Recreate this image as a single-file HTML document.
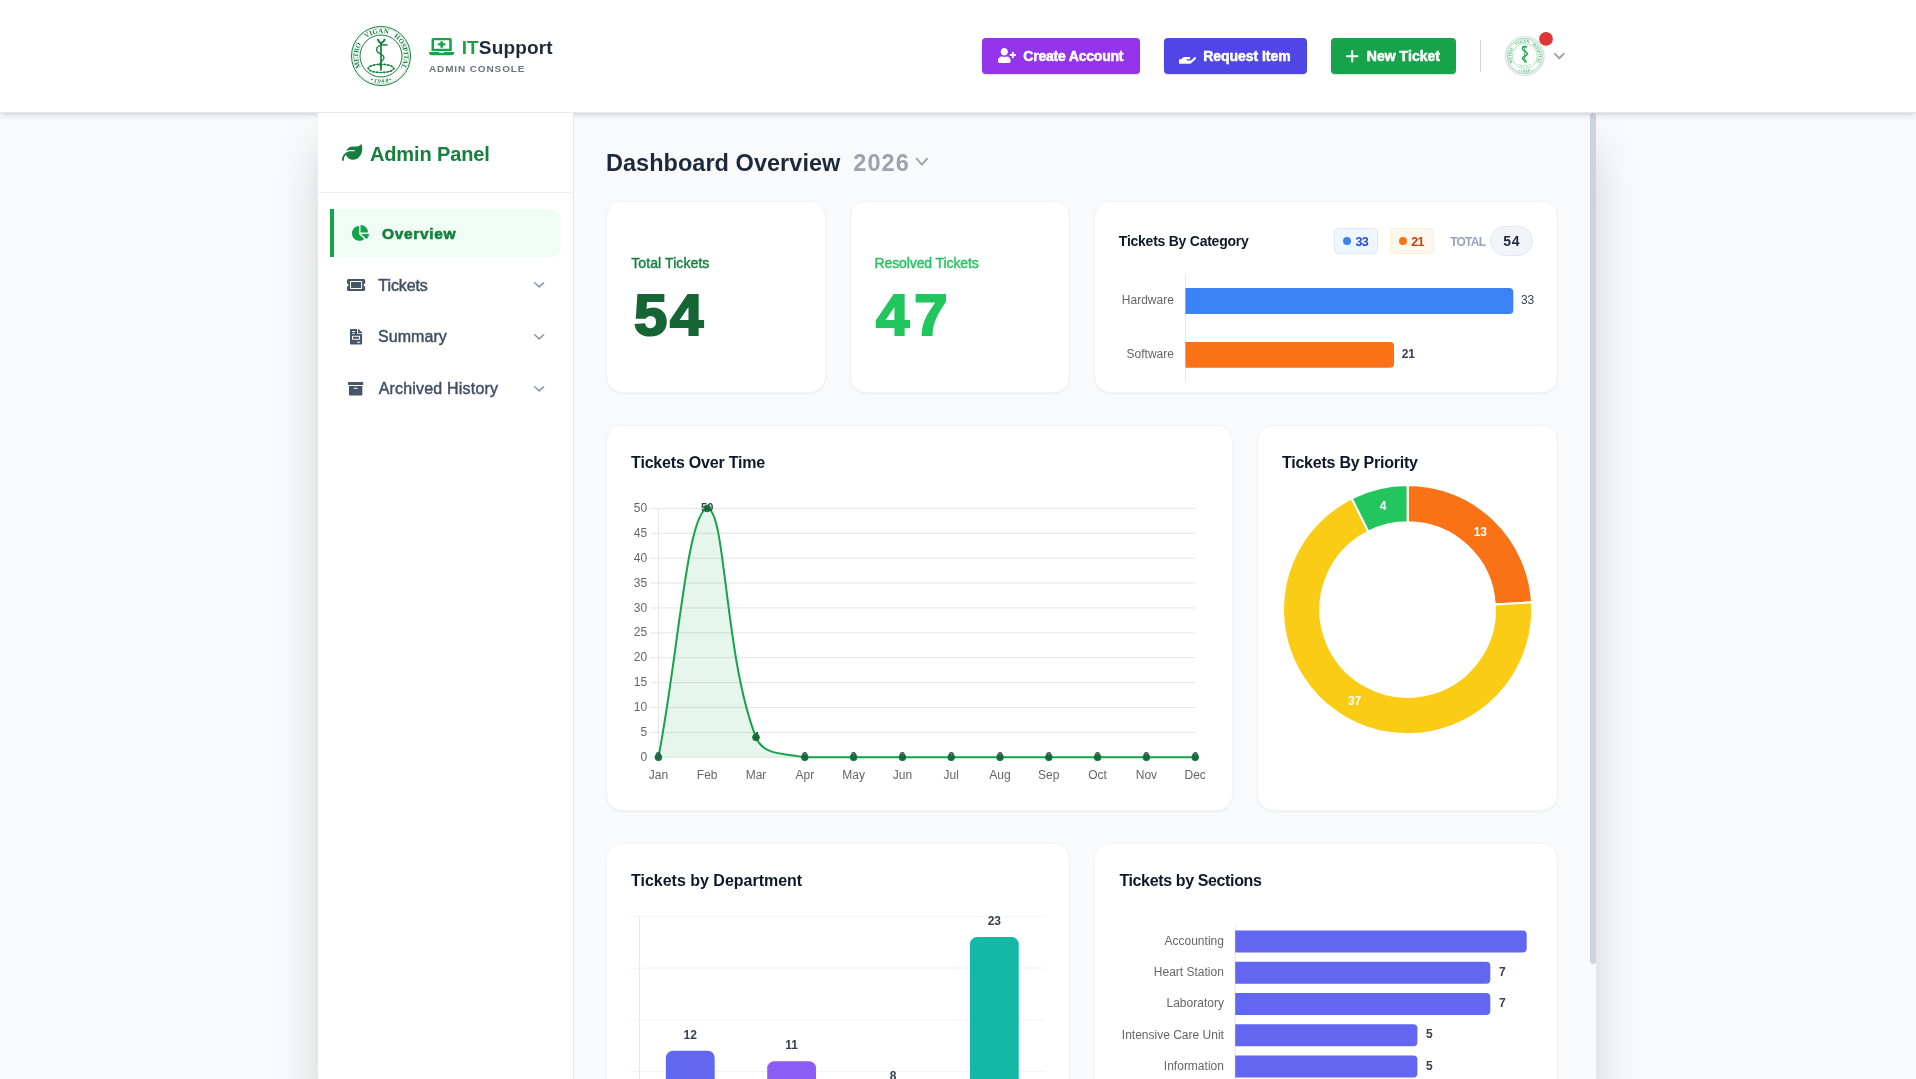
<!DOCTYPE html>
<html lang="en">
<head>
<meta charset="utf-8">
<title>ITSupport Admin Console</title>
<style>
*{box-sizing:border-box;margin:0;padding:0}
html,body{width:1916px;height:1079px;overflow:hidden}
body{background:#f9fafb;font-family:"Liberation Sans",sans-serif;color:#1e293b;position:relative}
.abs{position:absolute}
.t{position:absolute;white-space:nowrap;line-height:1}
#hdr{position:absolute;left:0;top:0;width:1916px;height:113px;background:#fff;border-bottom:1px solid #e5e7eb;box-shadow:0 4px 6px -1px rgba(0,0,0,.1),0 2px 4px -2px rgba(0,0,0,.1);z-index:5}
.btn{position:absolute;top:38px;height:36px;border-radius:4px;box-shadow:0 1px 2px rgba(0,0,0,.15)}
#shell{position:absolute;left:318px;top:113px;width:1278px;height:1000px;background:#f9fafb;box-shadow:0 25px 50px -12px rgba(0,0,0,.25)}
#side{position:absolute;left:318px;top:113px;width:256px;height:967px;background:#fff;border-right:1px solid #e5e7eb;z-index:6}
#sidehead{position:absolute;left:0;top:0;width:255px;height:80px;border-bottom:1px solid #eef0f3}
#navact{position:absolute;left:12px;top:96px;width:231px;height:48px;background:#f0fdf4;border-left:4px solid #16a34a;border-radius:0 10px 10px 0}
#sbar{position:absolute;left:1272px;top:0px;width:6px;height:851px;border-radius:3px;background:#cbd5e1}
.card{position:absolute;background:#fff;border-radius:16px;border:1px solid #f3f4f6;box-shadow:0 1px 2px rgba(0,0,0,.05)}
.chip{position:absolute;height:26px;border-radius:4px;border:1px solid}
.chip i{position:absolute;left:8px;top:8px;width:8px;height:8px;border-radius:50%}
#sidec{position:absolute;left:0;top:0;z-index:7}
svg{position:absolute;overflow:visible}
#page{position:absolute;left:0;top:0;width:1916px;height:1079px;overflow:hidden;will-change:transform}
svg text{font-family:"Liberation Sans",sans-serif}
</style>
</head>

<body>
<div id="page">
<div id="shell"><div id="sbar"></div></div>
<main id="main">
<div class="t" style="left:605.93px;top:150px;line-height:26px;font-size:23.5px;font-weight:700;color:#1e293b;letter-spacing:0.038px;">Dashboard Overview</div>
<div class="t" style="left:853.29px;top:150px;line-height:26px;font-size:23.5px;font-weight:700;color:#9ca3af;letter-spacing:1.062px;">2026</div>
<svg style="left:916px;top:157.8px" width="11.8" height="7.6" viewBox="0 0 11.8 7.6"><path d="M0.7 0.7L5.90 6.70L11.10 0.7" fill="none" stroke="#9ca3af" stroke-width="1.8" stroke-linecap="round" stroke-linejoin="round"/></svg>
<div class="card" style="left:606px;top:201px;width:220px;height:192px"></div>
<div class="card" style="left:850px;top:201px;width:220px;height:192px"></div>
<div class="card" style="left:1094px;top:201px;width:464px;height:192px"></div>
<div class="card" style="left:606px;top:425px;width:626.67px;height:386px"></div>
<div class="card" style="left:1256.67px;top:425px;width:301.33px;height:386px"></div>
<div class="card" style="left:606px;top:843px;width:464px;height:300px"></div>
<div class="card" style="left:1094px;top:843px;width:464px;height:300px"></div>
<div class="t" style="left:631.29px;top:255px;line-height:16px;font-size:14px;font-weight:400;color:#15803d;letter-spacing:0.087px;-webkit-text-stroke:.4px #15803d;">Total Tickets</div>
<div class="t" style="left:633.51px;top:283px;line-height:64px;font-size:57px;font-weight:700;color:#166534;letter-spacing:2.553px;-webkit-text-stroke:2.2px #166534;transform:scaleX(1.05);transform-origin:0 0;">54</div>
<div class="t" style="left:874.45px;top:255px;line-height:16px;font-size:14px;font-weight:400;color:#22c55e;letter-spacing:-0.095px;-webkit-text-stroke:.4px #22c55e;">Resolved Tickets</div>
<div class="t" style="left:876.45px;top:283px;line-height:64px;font-size:57px;font-weight:700;color:#22c55e;letter-spacing:4.814px;-webkit-text-stroke:2.2px #22c55e;transform:scaleX(1.05);transform-origin:0 0;">47</div>
<div class="t" style="left:1118.84px;top:233px;line-height:16px;font-size:14px;font-weight:700;color:#0f172a;letter-spacing:-0.246px;">Tickets By Category</div>
<div class="chip" style="left:1334px;top:228px;width:44px;background:#eff6ff;border-color:#dbeafe"><i style="background:#3b82f6"></i></div>
<div class="chip" style="left:1390px;top:228px;width:44px;background:#fff7ed;border-color:#ffedd5"><i style="background:#f97316"></i></div>
<div class="t" style="left:1355.41px;top:235px;line-height:14px;font-size:12.5px;font-weight:700;color:#1d4ed8;letter-spacing:-0.665px;">33</div>
<div class="t" style="left:1411.37px;top:235px;line-height:14px;font-size:12.5px;font-weight:700;color:#c2410c;letter-spacing:-0.923px;">21</div>
<div class="t" style="left:1450.17px;top:235px;line-height:14px;font-size:12px;font-weight:700;color:#94a3b8;letter-spacing:-0.770px;">TOTAL</div>
<div class="abs" style="left:1490px;top:226px;width:43px;height:30px;border-radius:15px;background:#f1f5f9;border:1px solid #e2e8f0"></div>
<div class="t" style="left:1503.17px;top:233px;line-height:16px;font-size:14px;font-weight:700;color:#1e293b;letter-spacing:0.834px;">54</div>
<svg id="charts" style="left:0;top:0" width="1916" height="1079" viewBox="0 0 1916 1079">
<g id="g-cat"><line x1="1185.4" y1="274.2" x2="1185.4" y2="381.7" stroke="#e5e7eb" stroke-width="1"/>
<path d="M1185.4 288.1h323.9a4 4 0 0 1 4 4v17.8a4 4 0 0 1 -4 4h-323.9z" fill="#3b82f6"/>
<text x="1173.9" y="303.9" text-anchor="end" font-size="12" fill="#666">Hardware</text>
<text x="1520.9" y="303.9" font-size="12" font-weight="400" fill="#374151">33</text>
<path d="M1185.4 341.9h204.66a4 4 0 0 1 4 4v17.8a4 4 0 0 1 -4 4h-204.66z" fill="#f97316"/>
<text x="1173.9" y="357.7" text-anchor="end" font-size="12" fill="#666">Software</text>
<text x="1401.66" y="357.7" font-size="12" font-weight="700" fill="#374151">21</text></g>
<g id="g-line"><line x1="650.4" y1="757.3" x2="1195.2" y2="757.3" stroke="#e5e5e5" stroke-width="1"/>
<text x="647.2" y="760.9" text-anchor="end" font-size="12" fill="#666">0</text>
<line x1="650.4" y1="732.41" x2="1195.2" y2="732.41" stroke="#e5e5e5" stroke-width="1"/>
<text x="647.2" y="736.01" text-anchor="end" font-size="12" fill="#666">5</text>
<line x1="650.4" y1="707.52" x2="1195.2" y2="707.52" stroke="#e5e5e5" stroke-width="1"/>
<text x="647.2" y="711.12" text-anchor="end" font-size="12" fill="#666">10</text>
<line x1="650.4" y1="682.63" x2="1195.2" y2="682.63" stroke="#e5e5e5" stroke-width="1"/>
<text x="647.2" y="686.23" text-anchor="end" font-size="12" fill="#666">15</text>
<line x1="650.4" y1="657.74" x2="1195.2" y2="657.74" stroke="#e5e5e5" stroke-width="1"/>
<text x="647.2" y="661.34" text-anchor="end" font-size="12" fill="#666">20</text>
<line x1="650.4" y1="632.85" x2="1195.2" y2="632.85" stroke="#e5e5e5" stroke-width="1"/>
<text x="647.2" y="636.45" text-anchor="end" font-size="12" fill="#666">25</text>
<line x1="650.4" y1="607.96" x2="1195.2" y2="607.96" stroke="#e5e5e5" stroke-width="1"/>
<text x="647.2" y="611.56" text-anchor="end" font-size="12" fill="#666">30</text>
<line x1="650.4" y1="583.07" x2="1195.2" y2="583.07" stroke="#e5e5e5" stroke-width="1"/>
<text x="647.2" y="586.67" text-anchor="end" font-size="12" fill="#666">35</text>
<line x1="650.4" y1="558.18" x2="1195.2" y2="558.18" stroke="#e5e5e5" stroke-width="1"/>
<text x="647.2" y="561.78" text-anchor="end" font-size="12" fill="#666">40</text>
<line x1="650.4" y1="533.29" x2="1195.2" y2="533.29" stroke="#e5e5e5" stroke-width="1"/>
<text x="647.2" y="536.89" text-anchor="end" font-size="12" fill="#666">45</text>
<line x1="650.4" y1="508.4" x2="1195.2" y2="508.4" stroke="#e5e5e5" stroke-width="1"/>
<text x="647.2" y="512" text-anchor="end" font-size="12" fill="#666">50</text>
<line x1="658.4" y1="508.4" x2="658.4" y2="757.3" stroke="#e5e5e5" stroke-width="1"/>
<text x="658.4" y="778.6" text-anchor="middle" font-size="12" fill="#666">Jan</text>
<text x="707.2" y="778.6" text-anchor="middle" font-size="12" fill="#666">Feb</text>
<text x="756" y="778.6" text-anchor="middle" font-size="12" fill="#666">Mar</text>
<text x="804.8" y="778.6" text-anchor="middle" font-size="12" fill="#666">Apr</text>
<text x="853.6" y="778.6" text-anchor="middle" font-size="12" fill="#666">May</text>
<text x="902.4" y="778.6" text-anchor="middle" font-size="12" fill="#666">Jun</text>
<text x="951.2" y="778.6" text-anchor="middle" font-size="12" fill="#666">Jul</text>
<text x="1000" y="778.6" text-anchor="middle" font-size="12" fill="#666">Aug</text>
<text x="1048.8" y="778.6" text-anchor="middle" font-size="12" fill="#666">Sep</text>
<text x="1097.6" y="778.6" text-anchor="middle" font-size="12" fill="#666">Oct</text>
<text x="1146.4" y="778.6" text-anchor="middle" font-size="12" fill="#666">Nov</text>
<text x="1195.2" y="778.6" text-anchor="middle" font-size="12" fill="#666">Dec</text>
<path d="M658.4 757.3C677.92 657.74 686.9 512.54 707.2 508.4C725.94 508.4 724.13 656.12 756 737.39C763.17 755.68 784.53 753.16 804.8 757.3C823.57 757.3 834.08 757.3 853.6 757.3C873.12 757.3 882.88 757.3 902.4 757.3C921.92 757.3 931.68 757.3 951.2 757.3C970.72 757.3 980.48 757.3 1000 757.3C1019.52 757.3 1029.28 757.3 1048.8 757.3C1068.32 757.3 1078.08 757.3 1097.6 757.3C1117.12 757.3 1126.88 757.3 1146.4 757.3C1165.92 757.3 1175.68 757.3 1195.2 757.3L1195.2 757.3L658.4 757.3Z" fill="rgba(22,163,74,0.1)"/>
<path d="M658.4 757.3C677.92 657.74 686.9 512.54 707.2 508.4C725.94 508.4 724.13 656.12 756 737.39C763.17 755.68 784.53 753.16 804.8 757.3C823.57 757.3 834.08 757.3 853.6 757.3C873.12 757.3 882.88 757.3 902.4 757.3C921.92 757.3 931.68 757.3 951.2 757.3C970.72 757.3 980.48 757.3 1000 757.3C1019.52 757.3 1029.28 757.3 1048.8 757.3C1068.32 757.3 1078.08 757.3 1097.6 757.3C1117.12 757.3 1126.88 757.3 1146.4 757.3C1165.92 757.3 1175.68 757.3 1195.2 757.3" fill="none" stroke="#16a34a" stroke-width="2" stroke-linejoin="round"/>
<text x="658.4" y="759.5" text-anchor="middle" font-size="11" font-weight="700" fill="#374151">0</text>
<text x="707.2" y="510.6" text-anchor="middle" font-size="11" font-weight="700" fill="#374151">50</text>
<text x="756" y="739.59" text-anchor="middle" font-size="11" font-weight="700" fill="#374151">4</text>
<text x="804.8" y="759.5" text-anchor="middle" font-size="11" font-weight="700" fill="#374151">0</text>
<text x="853.6" y="759.5" text-anchor="middle" font-size="11" font-weight="700" fill="#374151">0</text>
<text x="902.4" y="759.5" text-anchor="middle" font-size="11" font-weight="700" fill="#374151">0</text>
<text x="951.2" y="759.5" text-anchor="middle" font-size="11" font-weight="700" fill="#374151">0</text>
<text x="1000" y="759.5" text-anchor="middle" font-size="11" font-weight="700" fill="#374151">0</text>
<text x="1048.8" y="759.5" text-anchor="middle" font-size="11" font-weight="700" fill="#374151">0</text>
<text x="1097.6" y="759.5" text-anchor="middle" font-size="11" font-weight="700" fill="#374151">0</text>
<text x="1146.4" y="759.5" text-anchor="middle" font-size="11" font-weight="700" fill="#374151">0</text>
<text x="1195.2" y="759.5" text-anchor="middle" font-size="11" font-weight="700" fill="#374151">0</text>
<circle cx="658.4" cy="757.3" r="3.4" fill="#166534" fill-opacity=".92" stroke="#15803d" stroke-width="1"/>
<circle cx="707.2" cy="508.4" r="3.4" fill="#166534" fill-opacity=".92" stroke="#15803d" stroke-width="1"/>
<circle cx="756" cy="737.39" r="3.4" fill="#166534" fill-opacity=".92" stroke="#15803d" stroke-width="1"/>
<circle cx="804.8" cy="757.3" r="3.4" fill="#166534" fill-opacity=".92" stroke="#15803d" stroke-width="1"/>
<circle cx="853.6" cy="757.3" r="3.4" fill="#166534" fill-opacity=".92" stroke="#15803d" stroke-width="1"/>
<circle cx="902.4" cy="757.3" r="3.4" fill="#166534" fill-opacity=".92" stroke="#15803d" stroke-width="1"/>
<circle cx="951.2" cy="757.3" r="3.4" fill="#166534" fill-opacity=".92" stroke="#15803d" stroke-width="1"/>
<circle cx="1000" cy="757.3" r="3.4" fill="#166534" fill-opacity=".92" stroke="#15803d" stroke-width="1"/>
<circle cx="1048.8" cy="757.3" r="3.4" fill="#166534" fill-opacity=".92" stroke="#15803d" stroke-width="1"/>
<circle cx="1097.6" cy="757.3" r="3.4" fill="#166534" fill-opacity=".92" stroke="#15803d" stroke-width="1"/>
<circle cx="1146.4" cy="757.3" r="3.4" fill="#166534" fill-opacity=".92" stroke="#15803d" stroke-width="1"/>
<circle cx="1195.2" cy="757.3" r="3.4" fill="#166534" fill-opacity=".92" stroke="#15803d" stroke-width="1"/></g>
<g id="g-donut"><path d="M1407.6 485A124.6 124.6 0 0 1 1531.99 602.36L1494.75 604.52A87.3 87.3 0 0 0 1407.6 522.3Z" fill="#f97316" stroke="#fff" stroke-width="2" stroke-linejoin="round"/>
<path d="M1531.99 602.36A124.6 124.6 0 1 1 1351.68 498.25L1368.42 531.59A87.3 87.3 0 1 0 1494.75 604.52Z" fill="#facc15" stroke="#fff" stroke-width="2" stroke-linejoin="round"/>
<path d="M1351.68 498.25A124.6 124.6 0 0 1 1407.6 485L1407.6 522.3A87.3 87.3 0 0 0 1368.42 531.59Z" fill="#22c55e" stroke="#fff" stroke-width="2" stroke-linejoin="round"/>
<text x="1480.31" y="535.93" text-anchor="middle" font-size="12" font-weight="700" fill="#fff">13</text>
<text x="1354.62" y="704.76" text-anchor="middle" font-size="12" font-weight="700" fill="#fff">37</text>
<text x="1383.17" y="509.91" text-anchor="middle" font-size="12" font-weight="700" fill="#fff">4</text></g>
<g id="g-dept"><line x1="630.7" y1="916.4" x2="1045" y2="916.4" stroke="#f3f4f6" stroke-width="1"/>
<line x1="630.7" y1="968.1" x2="1045" y2="968.1" stroke="#f3f4f6" stroke-width="1"/>
<line x1="630.7" y1="1019.8" x2="1045" y2="1019.8" stroke="#f3f4f6" stroke-width="1"/>
<line x1="630.7" y1="1071.5" x2="1045" y2="1071.5" stroke="#f3f4f6" stroke-width="1"/>
<line x1="639.6" y1="916.4" x2="639.6" y2="1090" stroke="#e5e7eb" stroke-width="1"/>
<path d="M665.88 1090V1057.82a7 7 0 0 1 7 -7h34.8a7 7 0 0 1 7 7V1090z" fill="#6366f1"/>
<text x="690.27" y="1038.82" text-anchor="middle" font-size="12" font-weight="700" fill="#374151">12</text>
<path d="M767.23 1090V1068.16a7 7 0 0 1 7 -7h34.8a7 7 0 0 1 7 7V1090z" fill="#8b5cf6"/>
<text x="791.62" y="1049.16" text-anchor="middle" font-size="12" font-weight="700" fill="#374151">11</text>
<path d="M868.58 1090V1099.18a7 7 0 0 1 7 -7h34.8a7 7 0 0 1 7 7V1090z" fill="#ec4899"/>
<text x="892.98" y="1080.18" text-anchor="middle" font-size="12" font-weight="700" fill="#374151">8</text>
<path d="M969.93 1090V944.08a7 7 0 0 1 7 -7h34.8a7 7 0 0 1 7 7V1090z" fill="#14b8a6"/>
<text x="994.33" y="925.08" text-anchor="middle" font-size="12" font-weight="700" fill="#374151">23</text></g>
<g id="g-sect"><line x1="1235.2" y1="926.3" x2="1235.2" y2="1090" stroke="#e5e7eb" stroke-width="1"/>
<path d="M1235.2 930.6h287.52a4 4 0 0 1 4 4v13.8a4 4 0 0 1 -4 4h-287.52z" fill="#6366f1"/>
<text x="1223.9" y="944.8" text-anchor="end" font-size="12" fill="#666">Accounting</text>
<path d="M1235.2 961.85h251.08a4 4 0 0 1 4 4v13.8a4 4 0 0 1 -4 4h-251.08z" fill="#6366f1"/>
<text x="1223.9" y="976.05" text-anchor="end" font-size="12" fill="#666">Heart Station</text>
<text x="1498.88" y="975.75" font-size="12" font-weight="700" fill="#374151">7</text>
<path d="M1235.2 993.1h251.08a4 4 0 0 1 4 4v13.8a4 4 0 0 1 -4 4h-251.08z" fill="#6366f1"/>
<text x="1223.9" y="1007.3" text-anchor="end" font-size="12" fill="#666">Laboratory</text>
<text x="1498.88" y="1007" font-size="12" font-weight="700" fill="#374151">7</text>
<path d="M1235.2 1024.35h178.2a4 4 0 0 1 4 4v13.8a4 4 0 0 1 -4 4h-178.2z" fill="#6366f1"/>
<text x="1223.9" y="1038.55" text-anchor="end" font-size="12" fill="#666">Intensive Care Unit</text>
<text x="1426" y="1038.25" font-size="12" font-weight="700" fill="#374151">5</text>
<path d="M1235.2 1055.6h178.2a4 4 0 0 1 4 4v13.8a4 4 0 0 1 -4 4h-178.2z" fill="#6366f1"/>
<text x="1223.9" y="1069.8" text-anchor="end" font-size="12" fill="#666">Information</text>
<text x="1426" y="1069.5" font-size="12" font-weight="700" fill="#374151">5</text></g>
</svg>
<div class="t" style="left:631.12px;top:454px;line-height:17px;font-size:16px;font-weight:700;color:#0f172a;letter-spacing:-0.196px;">Tickets Over Time</div>
<div class="t" style="left:1282.02px;top:454px;line-height:17px;font-size:16px;font-weight:700;color:#0f172a;letter-spacing:-0.241px;">Tickets By Priority</div>
<div class="t" style="left:631.02px;top:872px;line-height:17px;font-size:16px;font-weight:700;color:#0f172a;letter-spacing:-0.007px;">Tickets by Department</div>
<div class="t" style="left:1119.42px;top:872px;line-height:17px;font-size:16px;font-weight:700;color:#0f172a;letter-spacing:-0.370px;">Tickets by Sections</div>
</main>
<header id="hdr">
<svg id="hsvg" style="left:0;top:0" width="1916" height="112" viewBox="0 0 1916 112">
<g transform="translate(381 56) scale(1)" fill="none" stroke="#15803d">
<circle r="29.5" stroke-width="1"/><circle r="28.1" stroke-width="0.4" stroke-opacity=".55"/><circle r="21" stroke-width="1"/>
</g>
<g transform="translate(381 56) scale(1)" fill="#15803d" style="font-family:'Liberation Serif',serif;font-weight:700;font-size:6.8px">
<path id="ap0" d="M-20.03 11.10A22.9 22.9 0 0 1 -19.63 -11.79" fill="none" stroke="none"/>
<text style="font-family:inherit" textLength="24.0" lengthAdjust="spacing"><textPath href="#ap0" textLength="24.0" lengthAdjust="spacing">METRO</textPath></text>
<path id="ap1" d="M-14.72 -17.54A22.9 22.9 0 0 1 7.08 -21.78" fill="none" stroke="none"/>
<text style="font-family:inherit" textLength="23.2" lengthAdjust="spacing"><textPath href="#ap1" textLength="23.2" lengthAdjust="spacing">VIGAN</textPath></text>
<path id="ap2" d="M12.81 -18.98A22.9 22.9 0 0 1 19.83 11.45" fill="none" stroke="none"/>
<text style="font-family:inherit" textLength="34.4" lengthAdjust="spacing"><textPath href="#ap2" textLength="34.4" lengthAdjust="spacing">HOSPITAL</textPath></text>
<path id="ap9" d="M-10.63 25.04A27.2 27.2 0 0 0 10.63 25.04" fill="none" stroke="none"/>
<text style="font-family:inherit;font-style:italic;font-size:6px" textLength="21.8" lengthAdjust="spacing"><textPath href="#ap9" textLength="21.8" lengthAdjust="spacing">•1998•</textPath></text>
</g>
<g transform="translate(381 56) scale(1)" fill="none" stroke="#15803d" stroke-linecap="round" stroke-linejoin="round">
<path d="M0 -13.5V14" stroke-width="1.7"/>
<path d="M-3 -16.3C-2.6 -14.6 -1.2 -13.4 0 -12.6C1.4 -13.4 3 -14.6 3.6 -16.3" stroke-width="2"/>
<path d="M6 -11C3 -11.4 -0.5 -11.3 -2.6 -9.8C-5.2 -7.9 -4.8 -5 -2.6 -3.4C-0.6 -1.9 2.6 -1.3 3 1.4C3.3 3.8 1 4.9 -0.4 6.4C-1.6 7.8 -1.2 9.6 0 10.6" stroke-width="1.35"/>
<ellipse cx="0" cy="12.4" rx="12.8" ry="4.1" stroke-width="0.75"/><ellipse cx="0" cy="12.4" rx="12.8" ry="4.1" stroke-width="1.7" stroke-dasharray="0.9 2.6"/>
</g>
<circle cx="1524.8" cy="56" r="19.3" fill="#fff" stroke="#d8d9e1" stroke-width="1.1"/>
<g transform="translate(1524.8 56) scale(0.6)" fill="none" stroke="#7fcf9d">
<circle r="29.3" stroke-width="1.2"/><circle r="27.6" stroke-width="0.6"/><circle r="20.8" stroke-width="1"/>
</g>
<g transform="translate(1524.8 56) scale(0.6)" fill="#38a862" style="font-family:'Liberation Serif',serif;font-weight:700;font-size:6.4px">
<path id="bp0" d="M-19.77 10.96A22.6 22.6 0 0 1 -19.37 -11.64" fill="none" stroke="none"/>
<text style="font-family:inherit" textLength="23.7" lengthAdjust="spacing"><textPath href="#bp0" textLength="23.7" lengthAdjust="spacing">METRO</textPath></text>
<path id="bp1" d="M-14.53 -17.31A22.6 22.6 0 0 1 6.98 -21.49" fill="none" stroke="none"/>
<text style="font-family:inherit" textLength="22.9" lengthAdjust="spacing"><textPath href="#bp1" textLength="22.9" lengthAdjust="spacing">VIGAN</textPath></text>
<path id="bp2" d="M12.64 -18.74A22.6 22.6 0 0 1 19.57 11.30" fill="none" stroke="none"/>
<text style="font-family:inherit" textLength="33.9" lengthAdjust="spacing"><textPath href="#bp2" textLength="33.9" lengthAdjust="spacing">HOSPITAL</textPath></text>
<path id="bp9" d="M-10.55 24.85A27.0 27.0 0 0 0 10.55 24.85" fill="none" stroke="none"/>
<text style="font-family:inherit;font-style:italic;font-size:5.8px" textLength="21.7" lengthAdjust="spacing"><textPath href="#bp9" textLength="21.7" lengthAdjust="spacing">•1998•</textPath></text>
</g>
<g transform="translate(1524.8 56)" fill="none" stroke="#16a34a" stroke-linecap="round" stroke-linejoin="round">
<path d="M0 -9.6V6.4" stroke-width="0.9"/>
<path d="M1.6 -9.2C-0.4 -10.2 -2.6 -9 -2.4 -7C-2.2 -5 2.6 -4.6 2.6 -2.2C2.6 0 -2.4 0.2 -2.4 2.4C-2.4 4.2 1.6 4.2 1.4 6" stroke-width="1.5"/>
<path d="M-5.4 8.2C-3.6 10.6 -1.4 10.6 0 9C1.4 10.6 3.6 10.6 5.4 8.2" stroke="#7fcf9d" stroke-width="0.8"/>
</g>
<circle cx="1546" cy="38.9" r="6.9" fill="#e03535"/>
</svg>
<svg style="left:428.8px;top:37.8px" width="25.3" height="17.2" viewBox="0 0 640 512" preserveAspectRatio="none"><path fill="#16a34a" fill-rule="evenodd" d="M232 224h56v56a8 8 0 0 0 8 8h48a8 8 0 0 0 8-8v-56h56a8 8 0 0 0 8-8v-48a8 8 0 0 0-8-8h-56v-56a8 8 0 0 0-8-8h-48a8 8 0 0 0-8 8v56h-56a8 8 0 0 0-8 8v48a8 8 0 0 0 8 8zM576 48a48.140 48.140 0 0 0-48-48H112a48.140 48.140 0 0 0-48 48v336h512zm-64 272H128V64h384zm112 96H381.540c-.74 19.810-14.710 32-32.740 32H288c-18.690 0-33-17.470-32.770-32H16a16 16 0 0 0-16 16v16a64.190 64.190 0 0 0 64 64h512a64.190 64.190 0 0 0 64-64v-16a16 16 0 0 0-16-16z"/></svg>
<div class="t" style="left:461.63px;top:37px;line-height:21px;font-size:19px;font-weight:700;color:#1e293b;letter-spacing:0.150px;"><span style="color:#16a34a">IT</span>Support</div>
<div class="t" style="left:428.95px;top:63px;line-height:11px;font-size:10px;font-weight:700;color:#6b7280;letter-spacing:0.878px;transform:scaleY(.88);transform-origin:0 9px;">ADMIN CONSOLE</div>
<div class="btn" style="left:982px;width:158px;background:#9333ea"></div>
<div class="btn" style="left:1164px;width:143px;background:#4f46e5"></div>
<div class="btn" style="left:1331px;width:125px;background:#16a34a"></div>
<svg style="left:997.6px;top:48px" width="18" height="15" viewBox="0 0 640 512" preserveAspectRatio="none"><path fill="#fff" fill-rule="evenodd" d="M624 208h-64v-64c0-8.800-7.200-16-16-16h-32c-8.800 0-16 7.200-16 16v64h-64c-8.800 0-16 7.200-16 16v32c0 8.800 7.200 16 16 16h64v64c0 8.800 7.200 16 16 16h32c8.800 0 16-7.200 16-16v-64h64c8.800 0 16-7.200 16-16v-32c0-8.800-7.200-16-16-16zm-400 48c70.700 0 128-57.300 128-128S294.700 0 224 0 96 57.300 96 128s57.300 128 128 128zm89.600 32h-16.700c-22.200 10.200-46.900 16-72.900 16s-50.600-5.800-72.900-16h-16.700C60.200 288 0 348.200 0 422.400V464c0 26.500 21.500 48 48 48h352c26.500 0 48-21.500 48-48v-41.600c0-74.200-60.200-134.400-134.400-134.400z"/></svg>
<svg style="left:1179.2px;top:56.5px" width="17" height="6.8" viewBox="0 320 576 192" preserveAspectRatio="none"><path fill="#fff" fill-rule="evenodd" d="M565.300 328.100c-11.800-10.700-30.200-10-42.600 0L430.300 402c-11.300 9.100-25.400 14-40 14H272c-8.800 0-16-7.200-16-16s7.200-16 16-16h78.300c15.900 0 30.700-10.900 33.300-26.600 3.300-20-12.100-37.400-31.600-37.400H192c-27 0-53.100 9.300-74.100 26.300L71.400 384H16c-8.800 0-16 7.200-16 16v96c0 8.800 7.200 16 16 16h356.800c14.500 0 28.600-4.900 40-14L564 377c15.200-12.100 16.400-35.300 1.300-48.900z"/></svg>
<svg style="left:1346.2px;top:49.8px" width="12.5" height="12.4" viewBox="16 48 416 416" preserveAspectRatio="none"><path fill="#fff" fill-rule="evenodd" d="M256 80c0-17.700-14.300-32-32-32s-32 14.300-32 32V224H48c-17.700 0-32 14.300-32 32s14.300 32 32 32H192V432c0 17.700 14.300 32 32 32s32-14.300 32-32V288H400c17.700 0 32-14.300 32-32s-14.300-32-32-32H256V80z"/></svg>
<div class="t" style="left:1023.28px;top:48px;line-height:16px;font-size:14px;font-weight:700;color:#fff;letter-spacing:-0.210px;-webkit-text-stroke:.5px #fff;">Create Account</div>
<div class="t" style="left:1203.21px;top:48px;line-height:16px;font-size:14px;font-weight:700;color:#fff;letter-spacing:-0.046px;-webkit-text-stroke:.5px #fff;">Request Item</div>
<div class="t" style="left:1366.81px;top:48px;line-height:16px;font-size:14px;font-weight:700;color:#fff;letter-spacing:0.036px;-webkit-text-stroke:.5px #fff;">New Ticket</div>
<div class="abs" style="left:1480px;top:40px;width:1px;height:32px;background:#d1d5db"></div>
<svg style="left:1553.7px;top:52.9px" width="10.6" height="6.2" viewBox="0 0 10.6 6.2"><path d="M0.7 0.7L5.30 5.30L9.90 0.7" fill="none" stroke="#9ca3af" stroke-width="1.9" stroke-linecap="round" stroke-linejoin="round"/></svg>
</header>
<aside id="side"><div id="sidehead"></div><div id="navact"></div></aside>
<nav id="sidec">
<svg style="left:341.9px;top:144px" width="20.3" height="17" viewBox="0 32 512 448" preserveAspectRatio="none"><path fill="#15803d" fill-rule="evenodd" d="M272 96c-78.600 0-145.100 51.500-167.700 122.500c33.600-17 71.500-26.500 111.700-26.500h88c8.800 0 16 7.200 16 16s-7.200 16-16 16H288 216s0 0 0 0c-16.600 0-32.700 1.900-48.200 5.400c-25.900 5.900-50 16.400-71.400 30.700c0 0 0 0 0 0C38.300 298.800 0 364.900 0 440v16c0 13.300 10.700 24 24 24s24-10.700 24-24V440c0-48.700 20.700-92.500 53.800-123.200C121.600 392.300 190.300 448 272 448l1 0c132.100-.7 239-130.900 239-291.400c0-42.600-7.500-83.100-21.100-119.600c-2.600-6.900-12.700-6.600-16.200-.1C455.900 72.100 418.700 96 376 96L272 96z"/></svg>
<div class="t" style="left:369.90px;top:143px;line-height:22px;font-size:20px;font-weight:700;color:#15803d;letter-spacing:-0.112px;">Admin Panel</div>
<svg style="left:351.9px;top:225.2px" width="17" height="15.8" viewBox="0 0 544 512" preserveAspectRatio="none"><path fill="#16a34a" fill-rule="evenodd" d="M527.79 288H290.5l158.030 158.030c6.040 6.040 15.980 6.530 22.190.68 38.700-36.460 65.320-85.610 73.130-140.860 1.340-9.460-6.510-17.850-16.060-17.850zm-15.830-64.800C503.720 103.740 408.260 8.280 288.800.04 279.680-.59 272 7.100 272 16.240V240h223.770c9.140 0 16.820-7.680 16.190-16.800zM224 288V50.710c0-9.550-8.390-17.400-17.840-16.060C86.990 51.490-4.100 155.600.14 280.370 4.500 408.510 114.830 513.590 243.030 511.980c50.400-.63 96.970-16.870 135.260-44.030 7.900-5.600 8.420-17.230 1.570-24.080L224 288z"/></svg>
<div class="t" style="left:381.96px;top:225px;line-height:17px;font-size:15.5px;font-weight:700;color:#15803d;letter-spacing:0.682px;-webkit-text-stroke:.6px #15803d;">Overview</div>
<svg style="left:346.8px;top:279px" width="18.2" height="12" viewBox="0 64 576 384" preserveAspectRatio="none"><path fill="#475569" fill-rule="evenodd" d="M128 160h320v192H128V160zm400 96c0 26.510 21.490 48 48 48v96c0 26.510-21.490 48-48 48H48c-26.510 0-48-21.490-48-48v-96c26.510 0 48-21.490 48-48s-21.490-48-48-48v-96c0-26.510 21.490-48 48-48h480c26.510 0 48 21.490 48 48v96c-26.510 0-48 21.490-48 48zm-48-104c0-13.255-10.745-24-24-24H120c-13.255 0-24 10.745-24 24v208c0 13.255 10.745 24 24 24h336c13.255 0 24-10.745 24-24V152z"/></svg>
<div class="t" style="left:378.37px;top:277px;line-height:17px;font-size:16px;font-weight:400;color:#414e63;letter-spacing:-0.098px;-webkit-text-stroke:.45px #414e63;">Tickets</div>
<svg style="left:533.9px;top:282.3px" width="10.4" height="5.8" viewBox="0 0 10.4 5.8"><path d="M0.7 0.7L5.20 4.90L9.70 0.7" fill="none" stroke="#8b96a8" stroke-width="1.5" stroke-linecap="round" stroke-linejoin="round"/></svg>
<svg style="left:349.9px;top:329px" width="12.1" height="15.6" viewBox="0 0 384 512" preserveAspectRatio="none"><path fill="#475569" fill-rule="evenodd" d="M288 256H96v64h192v-64zm89-151L279.100 7c-4.500-4.500-10.600-7-17-7H256v128h128v-6.100c0-6.300-2.500-12.400-7-16.900zm-153 31V0H24C10.700 0 0 10.700 0 24v464c0 13.300 10.700 24 24 24h336c13.300 0 24-10.700 24-24V160H248c-13.200 0-24-10.800-24-24zM64 72c0-4.420 3.580-8 8-8h80c4.420 0 8 3.580 8 8v16c0 4.420-3.580 8-8 8H72c-4.420 0-8-3.580-8-8V72zm0 64c0-4.420 3.580-8 8-8h80c4.420 0 8 3.580 8 8v16c0 4.420-3.580 8-8 8H72c-4.420 0-8-3.580-8-8v-16zm256 304c0 4.420-3.580 8-8 8h-80c-4.420 0-8-3.580-8-8v-16c0-4.420 3.580-8 8-8h80c4.420 0 8 3.580 8 8v16zm0-200v96c0 8.840-7.160 16-16 16H80c-8.840 0-16-7.160-16-16v-96c0-8.840 7.160-16 16-16h224c8.840 0 16 7.160 16 16z"/></svg>
<div class="t" style="left:378.00px;top:328px;line-height:17px;font-size:16px;font-weight:400;color:#414e63;letter-spacing:0.059px;-webkit-text-stroke:.45px #414e63;">Summary</div>
<svg style="left:533.9px;top:334.2px" width="10.4" height="5.8" viewBox="0 0 10.4 5.8"><path d="M0.7 0.7L5.20 4.90L9.70 0.7" fill="none" stroke="#8b96a8" stroke-width="1.5" stroke-linecap="round" stroke-linejoin="round"/></svg>
<svg style="left:348.4px;top:382.2px" width="15.3" height="13.6" viewBox="0 32 512 448" preserveAspectRatio="none"><path fill="#475569" fill-rule="evenodd" d="M32 448c0 17.700 14.300 32 32 32h384c17.700 0 32-14.300 32-32V160H32v288zm160-212c0-6.600 5.400-12 12-12h104c6.600 0 12 5.400 12 12v8c0 6.600-5.400 12-12 12H204c-6.600 0-12-5.400-12-12v-8zM480 32H32C14.300 32 0 46.300 0 64v48c0 8.800 7.200 16 16 16h480c8.800 0 16-7.200 16-16V64c0-17.700-14.300-32-32-32z"/></svg>
<div class="t" style="left:378.69px;top:380px;line-height:17px;font-size:16px;font-weight:400;color:#414e63;letter-spacing:0.189px;-webkit-text-stroke:.45px #414e63;">Archived History</div>
<svg style="left:533.9px;top:386.1px" width="10.4" height="5.8" viewBox="0 0 10.4 5.8"><path d="M0.7 0.7L5.20 4.90L9.70 0.7" fill="none" stroke="#8b96a8" stroke-width="1.5" stroke-linecap="round" stroke-linejoin="round"/></svg>
</nav>
</div>
</body>
</html>
